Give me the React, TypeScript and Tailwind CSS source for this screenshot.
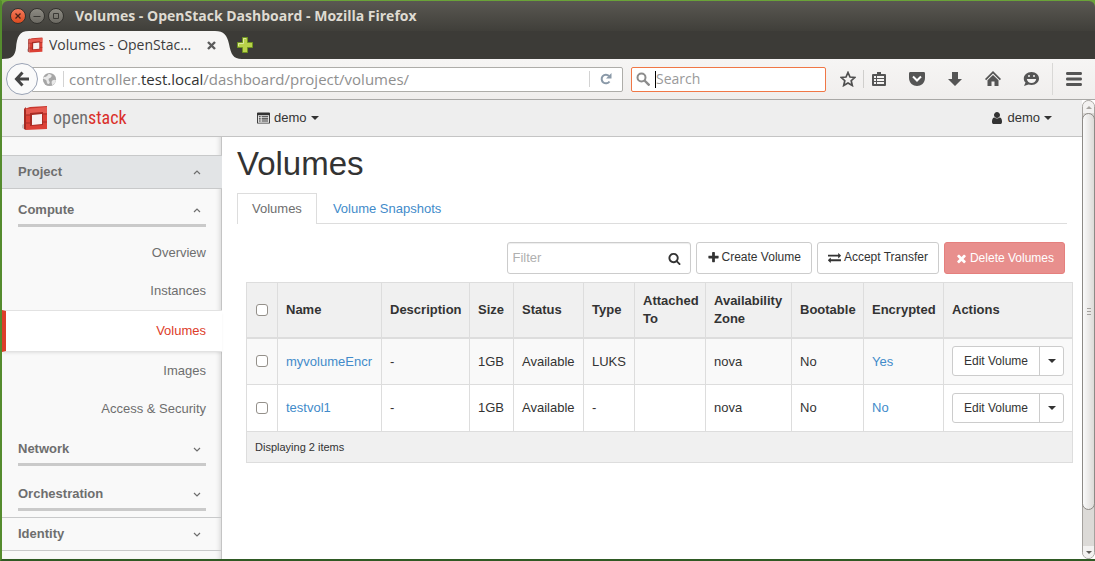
import { ReactNode, useState } from "react";
import clsx from "clsx";

type Volume = {
  name: string;
  description: string;
  size: string;
  status: string;
  type: string;
  attachedTo: string;
  zone: string;
  bootable: string;
  encrypted: string;
};

const volumes: Volume[] = [
  {
    name: "myvolumeEncr",
    description: "-",
    size: "1GB",
    status: "Available",
    type: "LUKS",
    attachedTo: "",
    zone: "nova",
    bootable: "No",
    encrypted: "Yes",
  },
  {
    name: "testvol1",
    description: "-",
    size: "1GB",
    status: "Available",
    type: "-",
    attachedTo: "",
    zone: "nova",
    bootable: "No",
    encrypted: "No",
  },
];

const columns = [
  { label: "Name", width: "w-[104px]" },
  { label: "Description", width: "w-[88px]" },
  { label: "Size", width: "w-[44px]" },
  { label: "Status", width: "w-[70px]" },
  { label: "Type", width: "w-[51px]" },
  { label: "Attached To", width: "w-[71px]" },
  { label: "Availability Zone", width: "w-[86px]" },
  { label: "Bootable", width: "w-[72px]" },
  { label: "Encrypted", width: "w-[80px]" },
  { label: "Actions", width: "" },
];

const computeItems = ["Overview", "Instances", "Volumes", "Images", "Access & Security"];

const iconPaths = {
  search:
    "M1216 832q0-185-131.5-316.5t-316.5-131.5-316.5 131.5-131.5 316.5 131.5 316.5 316.5 131.5 316.5-131.5 131.5-316.5zm512 832q0 52-38 90t-90 38q-54 0-90-38l-343-342q-179 124-399 124-143 0-273.5-55.5t-225-150-150-225-55.5-273.5 55.5-273.5 150-225 225-150 273.5-55.5 273.5 55.5 225 150 150 225 55.5 273.5q0 220-124 399l343 343q37 37 37 90z",
  plus: "M1600 736v192q0 40-28 68t-68 28h-416v416q0 40-28 68t-68 28h-192q-40 0-68-28t-28-68v-416h-416q-40 0-68-28t-28-68v-192q0-40 28-68t68-28h416v-416q0-40 28-68t68-28h192q40 0 68 28t28 68v416h416q40 0 68 28t28 68z",
  times:
    "M1490 1322q0 40-28 68l-136 136q-28 28-68 28t-68-28l-294-294-294 294q-28 28-68 28t-68-28l-136-136q-28-28-28-68t28-68l294-294-294-294q-28-28-28-68t28-68l136-136q28-28 68-28t68 28l294 294 294-294q28-28 68-28t68 28l136 136q28 28 28 68t-28 68l-294 294 294 294q28 28 28 68z",
  exchange:
    "M1792 1184v192q0 13-9.5 22.5t-22.5 9.5h-1376v192q0 13-9.5 22.5t-22.5 9.5q-12 0-24-10l-319-320q-9-9-9-22 0-14 9-23l320-320q9-9 23-9 13 0 22.5 9.5t9.5 22.5v192h1376q13 0 22.5 9.5t9.5 22.5zm0-544q0 14-9 23l-320 320q-9 9-23 9-13 0-22.5-9.5t-9.5-22.5v-192h-1376q-13 0-22.5-9.5t-9.5-22.5v-192q0-13 9.5-22.5t22.5-9.5h1376v-192q0-14 9-23t23-9q12 0 24 10l319 319q9 9 9 23z",
  user: "M1536 1399q0 109-62.5 187t-150.5 78h-854q-88 0-150.5-78t-62.5-187q0-85 8.5-160.5t31.5-152 58.5-131 94-89 134.5-34.5q131 128 313 128t313-128q76 0 134.5 34.5t94 89 58.5 131 31.5 152 8.5 160.5zm-256-887q0 159-112.5 271.5t-271.5 112.5-271.5-112.5-112.5-271.5 112.5-271.5 271.5-112.5 271.5 112.5 112.5 271.5z",
};

const Icon = ({ name, className }: { name: keyof typeof iconPaths; className?: string }) => (
  <svg viewBox="0 0 1792 1792" className={clsx("shrink-0 fill-current", className)} aria-hidden="true">
    <path d={iconPaths[name]} />
  </svg>
);

const Caret = () => (
  <svg viewBox="0 0 8 4" className="h-1 w-2 shrink-0 fill-current" aria-hidden="true">
    <path d="M0 0h8L4 4z" />
  </svg>
);

const Chevron = ({ up }: { up?: boolean }) => (
  <svg viewBox="0 0 8 5" className="mr-[5px] h-[5px] w-2 fill-none stroke-[#6e6e6e]" strokeWidth="1.2" aria-hidden="true">
    <path d={up ? "M1 4l3-3 3 3" : "M1 1l3 3 3-3"} />
  </svg>
);

// red cube mark, shared by the tab and the page header
const Cube = ({ className }: { className?: string }) => (
  <svg viewBox="0 0 26 26" className={className} aria-hidden="true">
    <path d="M0 20l3-2 1 7-4-2z" fill="#c9c4c3" />
    <path d="M2 4l2-2v23l-2-1z" fill="#a32a22" />
    <path d="M2 4l6-2 17-1v3L4 5z" fill="#c6372e" />
    <path d="M4 4l21-2v22L4 25z" fill="#dc4136" />
    <path d="M4 4l21-2v6L4 10z" fill="#e55a50" />
    <path d="M8 8l13-1v13L8 21z" fill="#a82b23" />
    <path d="M10 10l10-1v10l-10 1z" fill="#f7f2f1" />
    <path d="M2 10h6M21 9h4M2 18h6M21 17h4" stroke="#a52f27" strokeWidth="1" />
  </svg>
);

const TitleBar = () => (
  <div className="flex h-[30px] items-center rounded-t-md bg-linear-to-b from-[#5a5852] to-[#403f3a] pl-2">
    <div className="flex items-center gap-[3px]">
      <button aria-label="Close window" className="size-4 rounded-full border border-[#33322e] bg-linear-to-b from-[#f4795a] to-[#dc4a1c]">
        <svg viewBox="0 0 14 14" className="stroke-[#4a2218]" strokeWidth="1.3">
          <path d="M4.500 4.500l5 5M9.500 4.500l-5 5" />
        </svg>
      </button>
      <button aria-label="Minimize window" className="size-4 rounded-full border border-[#33322e] bg-linear-to-b from-[#8d8b83] to-[#6c6a63]">
        <svg viewBox="0 0 14 14" className="stroke-[#3a3935]" strokeWidth="1">
          <path d="M3.500 7.500h7" />
        </svg>
      </button>
      <button aria-label="Maximize window" className="size-4 rounded-full border border-[#33322e] bg-linear-to-b from-[#8d8b83] to-[#6c6a63]">
        <svg viewBox="0 0 14 14" className="fill-none stroke-[#3a3935]" strokeWidth="1">
          <path d="M4.500 4.500h5v5h-5z" />
        </svg>
      </button>
    </div>
    <h2 className="ml-[11px] text-sm font-bold text-[#dfdbd2]">Volumes - OpenStack Dashboard - Mozilla Firefox</h2>
  </div>
);

const TabStrip = () => (
  <div className="flex h-7 items-center bg-[#3c3b37]">
    <div className="relative flex h-7 w-[240px] items-center pl-[25px] text-[#3c3c3c]">
      <svg viewBox="0 0 240 28" preserveAspectRatio="none" className="absolute inset-0 h-full w-full" aria-hidden="true">
        <path d="M0 28C10 28 13 25 14 17C15 6 17 0 27 0H213C222 0 225 4 227 13C229 23 231 28 240 28z" fill="#f6f5f4" />
      </svg>
      <Cube className="relative h-4 w-4" />
      <span className="relative ml-[6px] flex-1 truncate text-sm">Volumes - OpenStac…</span>
      <button aria-label="Close tab" className="relative mr-[26px]">
        <svg viewBox="0 0 9 9" className="size-[9px] stroke-[#5b5b5b]" strokeWidth="2.400">
          <path d="M1 1l7 7M8 1L1 8" />
        </svg>
      </button>
    </div>
    <button aria-label="Open a new tab" className="-ml-[5px]">
      <svg viewBox="0 0 16 16" className="size-4">
        <path d="M5.500 .5h5v5h5v5h-5v5h-5v-5h-5v-5h5z" fill="#b9d24a" stroke="#6f9420" />
        <path d="M9 1.500H6.500v5h-5V9" stroke="#dcea9c" fill="none" />
      </svg>
    </button>
  </div>
);

const ToolButton = ({ label, children }: { label: string; children: ReactNode }) => (
  <button aria-label={label} className="flex w-[38px] justify-center">
    <svg viewBox="0 0 16 16" className="size-4 fill-[#555555]">
      {children}
    </svg>
  </button>
);

const NavBar = () => (
  <div className="flex h-[41px] items-center border-b border-[#a9a8a6] bg-linear-to-b from-[#f6f5f4] to-[#f0eeed] pl-1">
    <button
      aria-label="Back"
      className="relative z-10 flex size-8 shrink-0 items-center justify-center rounded-full border border-[#9aa3b5] bg-[#fafafa]"
    >
      <svg viewBox="0 0 16 16" className="size-4 fill-none stroke-[#444]" strokeWidth="3">
        <path d="M8.500 1.500L2.500 8l6 6.500M3 8h12" />
      </svg>
    </button>
    <div className="-ml-[6px] flex h-[25px] flex-1 items-center rounded-r-xs border border-[#aeada9] bg-white pl-[9px] text-[15px] text-[#8f8f8f]">
      <svg viewBox="0 0 16 16" className="size-[15px]" aria-hidden="true">
        <circle cx="8" cy="8" r="7" fill="#a6a6a6" />
        <path d="M2 5c2 1 4-1 5-3 2 0 4 1 3 3s-3 1-3 3 2 2 1 4-3 0-3-2-3-2-4-3zM11 9c2-1 3-1 4 0-1 3-2 4-4 5-1-2-1-4 0-5z" fill="#e9e9e9" />
      </svg>
      <div className="ml-[6px] h-4 w-px bg-[#d3d3d3]" />
      <div
        role="textbox"
        aria-label="Address"
        contentEditable
        suppressContentEditableWarning
        className="ml-[5px] flex-1 whitespace-nowrap outline-none"
      >
        controller.<span className="text-[#333]">test.local</span>/dashboard/project/volumes/
      </div>
      <div className="h-4 w-px bg-[#d3d3d3]" />
      <button aria-label="Reload" className="mx-[10px]">
        <svg viewBox="0 0 12 12" className="size-3 fill-none stroke-[#8a99a8]" strokeWidth="2">
          <path d="M9.500 8.500A4.300 4.300 0 1 1 9 3" />
          <path d="M11.500 0v5.500H6z" fill="#8a99a8" stroke="none" />
        </svg>
      </button>
    </div>
    <label className="ml-2 flex h-[25px] w-[195px] items-center rounded-xs border border-[#f07746] bg-white pl-1">
      <svg viewBox="0 0 14 14" className="size-[14px] fill-none stroke-[#8c8c8c]" strokeWidth="2">
        <circle cx="5.500" cy="5.500" r="4" />
        <path d="M8.500 8.500l5 5" strokeWidth="2.400" />
      </svg>
      <span className="ml-[5px] h-[17px] w-px bg-black" />
      <input aria-label="Search" placeholder="Search" className="min-w-0 flex-1 text-sm outline-none placeholder:text-[#9a9a9a]" />
    </label>
    <div className="ml-[3px] flex items-center pr-[2px]">
      <ToolButton label="Bookmark this page">
        <path d="M8 1.500l2 4.500 4.800.5-3.600 3.200 1.100 4.800L8 12l-4.300 2.500 1.100-4.800L1.200 6.500 6 6z" fill="none" stroke="#4f4f4f" strokeWidth="1.700" />
      </ToolButton>
      <div className="-mx-1 h-[18px] w-px bg-[#d0cfcd]" />
      <ToolButton label="Show bookmarks">
        <path d="M6 1h4v2h4q1 0 1 1v10q0 1-1 1H2q-1 0-1-1V4q0-1 1-1h4z" />
        <path d="M3 5h2v2H3zM6 5h7v2H6zM3 8h2v2H3zM6 8h7v2H6zM3 11h2v2H3zM6 11h7v2H6z" fill="#f4f3f2" />
      </ToolButton>
      <ToolButton label="Save to Pocket">
        <path d="M1.500 1h13c1 0 1.500.5 1.500 1.500V7c0 5-4 8-8 8S0 12 0 7V2.500C0 1.500.5 1 1.500 1z" />
        <path d="M4 5.500l4 4 4-4" fill="none" stroke="#fff" strokeWidth="2" />
      </ToolButton>
      <ToolButton label="Downloads">
        <path d="M5 1h6v7h4l-7 7-7-7h4z" />
      </ToolButton>
      <ToolButton label="Home">
        <path d="M8 0l8 8-1.200 1.200L8 2.600 1.200 9.200 0 8zM8 4l5.500 5.300V15H9.500v-4.500h-3V15h-4V9.300z" />
      </ToolButton>
      <ToolButton label="Start a conversation">
        <path d="M8.500 1C13 1 16 4 16 7.500S13 14 8.500 14c-1 0-2-.2-3-.5L1 15l1.500-3.500C1 10 .8 9 .8 7.500.8 4 4 1 8.500 1z" />
        <path d="M6 4a1 1 0 1 1 0 2 1 1 0 0 1 0-2zm5 0a1 1 0 1 1 0 2 1 1 0 0 1 0-2zM3.800 8h9.400c-.5 2.500-2.300 4-4.700 4s-4.200-1.500-4.700-4z" fill="#f4f3f2" />
      </ToolButton>
      <div className="mx-[2px] h-8 w-px bg-[#d9d8d6]" />
      <ToolButton label="Open menu">
        <path d="M1 1h14c1.300 0 1.300 3 0 3H1C-.3 4-.3 1 1 1zM1 6.500h14c1.300 0 1.300 3 0 3H1c-1.300 0-1.300-3 0-3zM1 12h14c1.300 0 1.300 3 0 3H1c-1.300 0-1.300-3 0-3z" />
      </ToolButton>
    </div>
  </div>
);

const PageHeader = () => (
  <header className="flex h-[37px] items-center border-b border-[#c4c4c4] bg-[#eeeeee] pl-5 pr-[30px] text-[13px] text-[#333]">
    <a href="#home" className="flex w-[235px] items-center">
      <Cube className="size-[26px]" />
      <span className="ml-[5px] font-['Liberation_Sans_Narrow','Roboto_Condensed','Liberation_Sans',sans-serif] text-lg leading-6 text-[#6d6e70]">
        open<span className="text-[#da2f2a]">stack</span>
      </span>
    </a>
    <button className="flex items-center gap-1">
      <svg viewBox="0 0 14 12" className="h-3 w-[13px] fill-current" aria-hidden="true">
        <path fillRule="evenodd" d="M1 0h12q1 0 1 1v10q0 1-1 1H1q-1 0-1-1V1q0-1 1-1zM1 3v8h12V3z" />
        <path d="M2 4h2v1.300H2zM5 4h7v1.300H5zM2 6.300h2v1.300H2zM5 6.300h7v1.300H5zM2 8.600h2v1.300H2zM5 8.600h7v1.300H5z" />
      </svg>
      demo
      <Caret />
    </button>
    <button className="ml-auto flex items-center gap-1">
      <Icon name="user" className="-mx-px size-[14px]" />
      demo
      <Caret />
    </button>
  </header>
);

const PanelGroup = ({ label, open }: { label: string; open?: boolean }) => (
  <button className="ml-4 mr-[15px] flex h-[38px] items-center justify-between border-b-3 border-[#cacaca] pt-[7px] font-bold" aria-expanded={!!open}>
    {label}
    <Chevron up={open} />
  </button>
);

const Sidebar = () => (
  <nav className="flex w-[220px] shrink-0 flex-col border-r border-[#c4c4c4] bg-[#f9f9f9] pt-[18px] text-[#6e6e6e] shadow-[inset_-4px_0_5px_-3px_#00000026]">
    <button className="-mr-px flex h-[34px] items-center justify-between border-y border-[#c8c9ca] bg-[#e2e4e6] px-4 font-bold" aria-expanded="true">
      Project
      <Chevron up />
    </button>
    <PanelGroup label="Compute" open />
    <ul className="pt-[7px] text-right">
      {computeItems.map(item => {
        const isActive = item === "Volumes";
        return (
          <li key={item} className={clsx(isActive && "-mr-px")}>
            <a
              href={`#${item.toLowerCase()}`}
              className={clsx(
                "flex items-center justify-end",
                isActive
                  ? "h-[42px] border-y border-l-4 border-y-[#e2e2e2] border-l-[#dd3d2a] bg-white pr-4 text-[#dd3d2a] shadow-[0_2px_3px_-1px_#0000001a]"
                  : "h-[38px] pr-[15px]",
              )}
            >
              {item}
            </a>
          </li>
        );
      })}
    </ul>
    <PanelGroup label="Network" />
    <div className="mt-[7px] flex flex-col">
      <PanelGroup label="Orchestration" />
    </div>
    <button className="mt-[6px] flex h-[34px] items-center justify-between border-y border-[#c8c9ca] pl-4 pr-[15px] font-bold" aria-expanded="false">
      Identity
      <Chevron />
    </button>
  </nav>
);

const Checkbox = ({ label, checked, onChange }: { label: string; checked: boolean; onChange: () => void }) => (
  <input
    type="checkbox"
    aria-label={label}
    checked={checked}
    onChange={onChange}
    className="ml-px block size-3 appearance-none rounded-[3px] border border-[#94908a] bg-white checked:bg-[#428bca]"
  />
);

const VolumesTable = () => {
  const [selected, setSelected] = useState<string[]>([]);

  const toggle = (name: string) => {
    setSelected(selected.includes(name) ? selected.filter(n => n !== name) : [...selected, name]);
  };

  const toggleAll = () => {
    setSelected(selected.length === volumes.length ? [] : volumes.map(v => v.name));
  };

  return (
    <table className="w-full table-fixed border-collapse border border-[#dddddd] text-left [&_td]:border [&_td]:border-[#dddddd] [&_td]:px-2 [&_th]:border [&_th]:border-[#dddddd] [&_th]:px-2">
      <thead>
        <tr className="h-[55px] border-b-2 border-[#dddddd] bg-[#f0f0f0]">
          <th className="w-[31px]">
            <Checkbox label="Select all volumes" checked={selected.length === volumes.length} onChange={toggleAll} />
          </th>
          {columns.map(col => (
            <th key={col.label} className={clsx("leading-[18px]", col.width)}>
              {col.label}
            </th>
          ))}
        </tr>
      </thead>
      <tbody>
        {volumes.map(volume => (
          <tr key={volume.name} className="h-[47px] odd:bg-[#f9f9f9]">
            <td>
              <Checkbox label={`Select ${volume.name}`} checked={selected.includes(volume.name)} onChange={() => toggle(volume.name)} />
            </td>
            <td>
              <a href={`#${volume.name}`} className="text-[#428bca]">
                {volume.name}
              </a>
            </td>
            <td>{volume.description}</td>
            <td>{volume.size}</td>
            <td>{volume.status}</td>
            <td>{volume.type}</td>
            <td>{volume.attachedTo}</td>
            <td>{volume.zone}</td>
            <td>{volume.bootable}</td>
            <td>
              <a href={`#${volume.name}-encryption`} className="text-[#428bca]">
                {volume.encrypted}
              </a>
            </td>
            <td>
              <div className="flex h-[30px] w-28 rounded-[3px] border border-[#cccccc] bg-white text-xs">
                <button className="flex-1 pb-px">Edit Volume</button>
                <button aria-label={`More actions for ${volume.name}`} className="flex w-6 items-center justify-center border-l border-[#cccccc]">
                  <Caret />
                </button>
              </div>
            </td>
          </tr>
        ))}
      </tbody>
      <tfoot>
        <tr className="h-[31px] bg-[#f0f0f0] text-[11px]">
          <td colSpan={columns.length + 1}>Displaying {volumes.length} items</td>
        </tr>
      </tfoot>
    </table>
  );
};

const MainPanel = () => (
  <main className="min-w-0 flex-1 pl-[15px] pr-[9px]">
    <h1 className="pt-[7px] text-[33px] leading-10">Volumes</h1>
    <div className="mr-[6px] mt-[9px] flex h-[31px] border-b border-[#dddddd]">
      <a href="#volumes" className="flex h-[31px] items-center border border-b-0 border-[#dddddd] bg-white px-[14px] text-[#6e6e6e]">
        Volumes
      </a>
      <a href="#snapshots" className="flex h-[31px] items-center px-4 text-[#428bca]">
        Volume Snapshots
      </a>
    </div>
    <div className="pl-[9px] pt-[18px]">
      <div className="mb-2 mr-2 flex h-8 justify-end gap-[5px] text-xs">
        <label className="flex w-[184px] items-center rounded-[3px] border border-[#cccccc] pl-[5px] pr-[9px] shadow-[inset_0_1px_1px_#00000013]">
          <input aria-label="Filter" placeholder="Filter" className="min-w-0 flex-1 text-[13px] outline-none placeholder:text-[#b0b0b0]" />
          <Icon name="search" className="size-[13px]" />
        </label>
        <button className="flex items-center rounded-[3px] border border-[#cccccc] px-[10px] pb-[2px]">
          <Icon name="plus" className="mr-[2px] size-[13px]" />
          Create Volume
        </button>
        <button className="flex items-center rounded-[3px] border border-[#cccccc] px-[10px] pb-[2px]">
          <Icon name="exchange" className="mr-[3px] size-[13px]" />
          Accept Transfer
        </button>
        <button className="flex items-center rounded-[3px] border border-[#e57f7d] bg-[#e88f8d] px-[10px] text-white">
          <Icon name="times" className="mr-[2px] size-[13px]" />
          Delete Volumes
        </button>
      </div>
      <VolumesTable />
    </div>
  </main>
);

const ScrollBar = () => (
  <div className="flex w-[13px] shrink-0 flex-col rounded-full border border-[#a5a29e] bg-[#dcdad7]" aria-hidden="true">
    <div className="flex h-3 items-center justify-center rounded-t-full bg-[#f3f2f1]">
      <svg viewBox="0 0 6 3" className="h-[3px] w-[6px] fill-[#a8a5a1]">
        <path d="M0 3l3-3 3 3z" />
      </svg>
    </div>
    <div className="-mx-px flex flex-[398] flex-col items-center justify-center gap-[2px] rounded-full border border-[#8d8a86] bg-linear-to-r from-[#fafafa] to-[#dddbd8]">
      <div className="h-px w-1 bg-[#a5a29e]" />
      <div className="h-px w-1 bg-[#a5a29e]" />
      <div className="h-px w-1 bg-[#a5a29e]" />
    </div>
    <div className="flex-[36]" />
    <div className="flex h-3 items-center justify-center rounded-b-full bg-[#f3f2f1]">
      <svg viewBox="0 0 6 3" className="h-[3px] w-[6px] fill-[#5f5d5a]">
        <path d="M0 0h6L3 3z" />
      </svg>
    </div>
  </div>
);

export default function App() {
  return (
    <div className="flex min-h-screen flex-col border-b-2 border-l-2 border-t border-b-[#2f5a24] border-l-[#558c2e] border-t-[#6aa338] bg-[#6aa338] font-['Open_Sans','Noto_Sans',sans-serif]">
      <TitleBar />
      <TabStrip />
      <NavBar />
      <div className="flex flex-1 bg-white font-['Liberation_Sans',Arial,sans-serif] text-[13px] text-[#333]">
        <div className="flex min-w-0 flex-1 flex-col">
          <PageHeader />
          <div className="flex flex-1">
            <Sidebar />
            <MainPanel />
          </div>
        </div>
        <ScrollBar />
      </div>
    </div>
  );
}
